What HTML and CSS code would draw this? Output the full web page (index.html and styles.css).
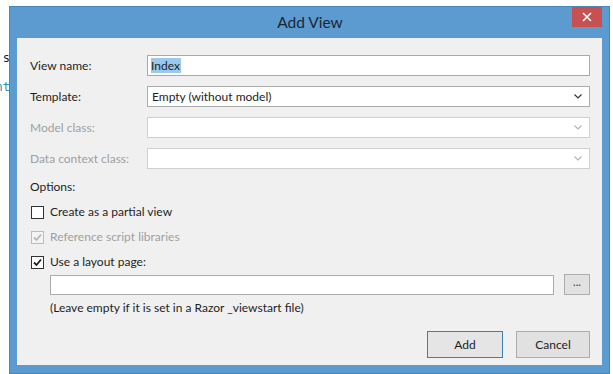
FILE: index.html
```html
<!DOCTYPE html>
<html lang="en">
<head>
    <meta charset="UTF-8">
    <title>Add View</title>
    <link rel="stylesheet" href="styles.css">
</head>
<body>
    <div class="ide">
        <div class="ide-line">s</div>
        <div class="ide-line code">nt</div>
    </div>

    <div class="dialog">
        <div class="titlebar">
            <span></span>
            <h1 class="title">Add View</h1>
            <div class="close">
                <svg width="10" height="10" viewBox="0 0 10 10"><path d="M1 1 L9 9 M9 1 L1 9" stroke="#fff" stroke-width="1.6"/></svg>
            </div>
        </div>

        <div class="body">
            <div class="fields">
                <label class="label">View name:</label>
                <div class="input focus"><span class="sel">Index</span></div>

                <label class="label">Template:</label>
                <div class="select">
                    <span>Empty (without model)</span>
                    <svg width="8" height="5" viewBox="0 0 8 5"><path d="M0.5 0.5 L4 4 L7.5 0.5" fill="none" stroke="#333" stroke-width="1.2"/></svg>
                </div>

                <label class="label disabled">Model class:</label>
                <div class="select off">
                    <span></span>
                    <svg width="8" height="5" viewBox="0 0 8 5"><path d="M0.5 0.5 L4 4 L7.5 0.5" fill="none" stroke="#b4b4b4" stroke-width="1.2"/></svg>
                </div>

                <label class="label disabled">Data context class:</label>
                <div class="select off">
                    <span></span>
                    <svg width="8" height="5" viewBox="0 0 8 5"><path d="M0.5 0.5 L4 4 L7.5 0.5" fill="none" stroke="#b4b4b4" stroke-width="1.2"/></svg>
                </div>
            </div>

            <div class="options">Options:</div>

            <div class="check">
                <span class="box"></span>
                <span>Create as a partial view</span>
            </div>
            <div class="check disabled">
                <span class="box off">
                    <svg width="11" height="11" viewBox="0 0 11 11"><path d="M2 5.5 L4.5 8 L9 2.5" fill="none" stroke="#b8b8b8" stroke-width="1.8"/></svg>
                </span>
                <span>Reference script libraries</span>
            </div>
            <div class="check">
                <span class="box">
                    <svg width="11" height="11" viewBox="0 0 11 11"><path d="M2 5.5 L4.5 8 L9 2.5" fill="none" stroke="#1e1e1e" stroke-width="1.8"/></svg>
                </span>
                <span>Use a layout page:</span>
            </div>

            <div class="layout-row">
                <div class="input"></div>
                <div class="browse">...</div>
            </div>
            <div class="note">(Leave empty if it is set in a Razor _viewstart file)</div>

            <div class="buttons">
                <div class="btn default">Add</div>
                <div class="btn">Cancel</div>
            </div>
        </div>
    </div>
</body>
</html>
```

FILE: styles.css
```css
*{
    margin: 0;
    padding: 0;
    box-sizing: border-box;
}
body{
    display: flex;
    align-items: flex-start;
    background: #fff;
    font-family: 'Lato', 'Noto Sans', sans-serif;
    font-size: 12px;
    color: #1e1e1e;
    height: 374px;
    overflow: hidden;
}
.ide{
    width: 10px;
    overflow: hidden;
    padding-top: 51px;
    font-family: 'DejaVu Sans Mono', monospace;
    font-size: 12px;
}
.ide-line{
    height: 29px;
    text-align: right;
    direction: rtl;
    white-space: nowrap;
}
.ide .code{
    color: #2b91af;
}
.dialog{
    margin-top: 7px;
    width: 599px;
    height: 366px;
    background: #5b9bd0;
    padding: 0 7px 8px 7px;
    display: flex;
    flex-direction: column;
    box-shadow: 0 0 0 1px #4a86b8;
}
.titlebar{
    height: 31px;
    display: grid;
    grid-template-columns: 1fr auto 1fr;
    align-items: start;
}
.title{
    font-weight: normal;
    font-size: 15.5px;
    color: #1b2633;
    line-height: 30px;
    padding-left: 1px;
}
.close{
    justify-self: end;
    width: 30px;
    height: 20px;
    background: #c75050;
    display: flex;
    justify-content: center;
    align-items: center;
}
.body{
    flex: 1;
    background: #f0f0f0;
    padding: 17px 12px 0 13px;
    display: flex;
    flex-direction: column;
}
.fields{
    display: grid;
    grid-template-columns: 117px 1fr;
    row-gap: 10px;
    align-items: center;
}
.label.disabled,
.check.disabled{
    color: #a0a0a0;
}
.input{
    height: 21px;
    background: #fff;
    border: 1px solid #acacac;
    padding: 0 3px;
    display: flex;
    align-items: center;
}
.input.focus{
    border-color: #7eb4ea;
}
.sel{
    background: #99c9ef;
    line-height: 15px;
    padding-right: 1px;
}
.select{
    height: 21px;
    background: #fff;
    border: 1px solid #acacac;
    display: flex;
    justify-content: space-between;
    align-items: center;
    padding: 0 7px 0 4px;
}
.select.off{
    border-color: #cfcfcf;
}
.options{
    margin-top: 10px;
    line-height: 16px;
}
.check{
    margin-top: 9px;
    display: flex;
    align-items: center;
    gap: 6px;
    padding-left: 1px;
    line-height: 16px;
}
.box{
    width: 13px;
    height: 13px;
    border: 1px solid #333;
    background: #fff;
    display: flex;
    justify-content: center;
    align-items: center;
}
.box.off{
    border-color: #bcbcbc;
    background: #f4f4f4;
}
.layout-row{
    margin-top: 4px;
    padding-left: 20px;
    display: flex;
    gap: 10px;
    align-items: center;
}
.layout-row .input{
    flex: 1;
    height: 20px;
}
.browse{
    width: 26px;
    height: 21px;
    background: #e1e1e1;
    border: 1px solid #adadad;
    text-align: center;
    line-height: 14px;
    font-size: 11px;
    color: #333;
}
.note{
    margin-top: 5px;
    padding-left: 20px;
    line-height: 16px;
}
.buttons{
    margin-top: 15px;
    display: flex;
    justify-content: flex-end;
    gap: 13px;
}
.btn{
    width: 74px;
    height: 27px;
    background: #e1e1e1;
    border: 1px solid #adadad;
    display: flex;
    justify-content: center;
    align-items: center;
}
.btn.default{
    border-color: #3c7fb1;
    background: #e5e5e5;
    width: 76px;
}
```
